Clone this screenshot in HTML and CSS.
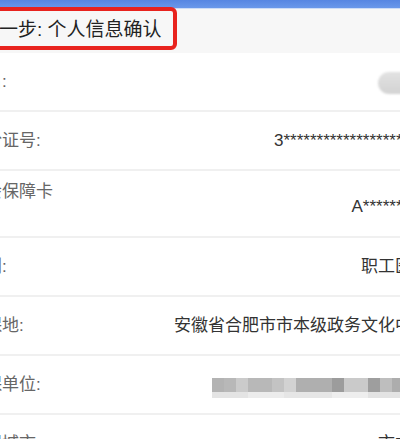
FILE: index.html
```html
<!DOCTYPE html>
<html lang="zh-CN">
<head>
<meta charset="utf-8">
<title>个人信息确认</title>
<link rel="stylesheet" href="styles.css">
</head>
<body>
<div class="topbar"></div>
<div class="page">
  <header class="head">
    <h1 class="title">第一步: 个人信息确认</h1>
  </header>
  <div class="list">
    <div class="row">
      <span class="label">姓名:</span>
      <span class="mask-pill"></span>
    </div>
    <div class="row">
      <span class="label">身份证号:</span>
      <span class="value">3**********************</span>
    </div>
    <div class="row row-tall">
      <span class="label">社会保障卡号:</span>
      <span class="value value-low">A**********</span>
    </div>
    <div class="row">
      <span class="label">类别:</span>
      <span class="value">职工医保</span>
    </div>
    <div class="row">
      <span class="label">参保地:</span>
      <span class="value">安徽省合肥市市本级政务文化中心</span>
    </div>
    <div class="row">
      <span class="label">参保单位:</span>
      <span class="mask-bar"><span class="mask-top"></span><span class="mask-bottom"></span></span>
    </div>
    <div class="row">
      <span class="label">参保城市:</span>
      <span class="value">市本级</span>
    </div>
  </div>
</div>
</body>
</html>
```
FILE: styles.css
```css
html, body {
  margin: 0;
  padding: 0;
  background: #ffffff;
  overflow: hidden;
}

body {
  width: 400px;
  height: 439px;
  font-family: "Liberation Sans", "Noto Sans CJK SC", sans-serif;
}

.topbar {
  height: 8px;
  background: linear-gradient(#5786e2, #6a98ea);
  border-bottom: 1px solid #cddcf6;
}

.page {
  width: 456px;
  margin-left: -27px;
}

.head {
  height: 44px;
  background: #f7f7f7;
}

.title {
  display: inline-block;
  box-sizing: border-box;
  height: 43px;
  margin: -2px 0 0 -4px;
  padding: 2px 11px 0 7px;
  border: 4px solid #e8231e;
  border-radius: 0 6px 6px 0;
  font-size: 19px;
  font-weight: normal;
  line-height: 33px;
  color: #222222;
}

.list {
  background: #ffffff;
}

.row {
  display: flex;
  align-items: center;
  justify-content: space-between;
  height: 57px;
  border-bottom: 2px solid #f0f0f0;
  font-size: 17px;
  line-height: 24px;
}

.row-tall {
  height: 65px;
}

.label {
  flex: 0 0 auto;
  max-width: 90px;
  margin-left: -5px;
  color: #666666;
}

.value {
  flex: 0 0 auto;
  white-space: nowrap;
  color: #333333;
}

.value-low {
  margin-top: 7px;
}

.mask-pill {
  flex: 0 0 auto;
  width: 51px;
  height: 22px;
  margin-top: 2px;
  border-radius: 11px;
  background: linear-gradient(#e2e2e2, #d3d3d3);
  filter: blur(1px);
}

.mask-bar {
  flex: 0 0 auto;
  display: flex;
  flex-direction: column;
  width: 217px;
  margin-top: 7px;
  filter: blur(0.7px);
}

.mask-top {
  height: 14px;
  background: linear-gradient(90deg,
    #b3b3b3 0 12px, #b8b8b8 12px 24px, #cbcbcb 24px 36px,
    #b8b8b8 36px 60px, #c3c3c3 60px 72px, #d2d2d2 72px 84px,
    #afafaf 84px 120px, #9c9c9c 120px 132px, #cacaca 132px 156px,
    #9e9e9e 156px 168px, #bebebe 168px 180px, #adadad 180px 192px,
    #c0c0c0 192px 204px, #b5b5b5 204px 217px);
}

.mask-bottom {
  height: 6px;
  background: linear-gradient(90deg,
    #e4e4e4 0 36px, #ececec 36px 72px, #e6e6e6 72px 120px,
    #eeeeee 120px 156px, #e3e3e3 156px 192px, #eaeaea 192px 217px);
}
```
